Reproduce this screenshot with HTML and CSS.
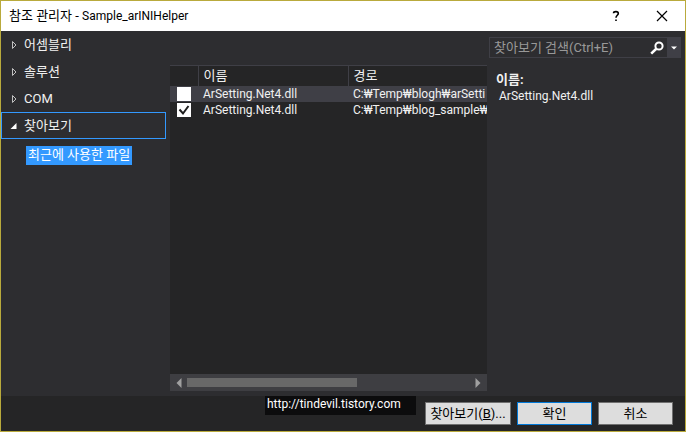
FILE: index.html
```
<!DOCTYPE html>
<html lang="ko">
<head>
  <meta charset="UTF-8">
  <title>참조 관리자 - Sample_arINIHelper</title>
  <link rel="stylesheet" href="styles.css">
</head>
<body>
  <div class="window">
    <header class="titlebar">
      <h1>참조 관리자 - <span class="latin">Sample_arINIHelper</span></h1>
      <button class="title-button" type="button" aria-label="도움말">
        <svg width="12" height="12" viewBox="0 0 12 12" fill="none" stroke="#000" stroke-width="1.6"><path d="M3.5 3.2C3.7 1 8.3 1 8.3 3.5C8.3 5.3 6 5.3 6 7.8M6 9.4V11"/></svg>
      </button>
      <button class="title-button" type="button" aria-label="닫기">
        <svg width="12" height="12" viewBox="0 0 12 12" fill="none" stroke="#000" stroke-width="1.2"><path d="M1 1L11 11M11 1L1 11"/></svg>
      </button>
    </header>

    <main class="content">
      <nav class="sidebar">
        <button class="group" type="button">
          <svg class="arrow" width="8" height="8" viewBox="0 0 8 8" fill="none" stroke="#c0c0c0"><path d="M2.5 .5V7.5L6 4Z"/></svg>
          어셈블리
        </button>
        <button class="group" type="button">
          <svg class="arrow" width="8" height="8" viewBox="0 0 8 8" fill="none" stroke="#c0c0c0"><path d="M2.5 .5V7.5L6 4Z"/></svg>
          솔루션
        </button>
        <button class="group" type="button">
          <svg class="arrow" width="8" height="8" viewBox="0 0 8 8" fill="none" stroke="#c0c0c0"><path d="M2.5 .5V7.5L6 4Z"/></svg>
          COM
        </button>
        <button class="group selected" type="button" aria-expanded="true">
          <svg class="arrow" width="8" height="8" viewBox="0 0 8 8" fill="#fff"><path d="M6.5 1V7H.5Z"/></svg>
          찾아보기
        </button>
        <a class="recent" href="#">최근에 사용한 파일</a>
      </nav>

      <section class="list">
        <div class="list-view">
          <table>
            <thead>
              <tr>
                <th class="check-col"></th>
                <th class="name-col">이름</th>
                <th>경로</th>
              </tr>
            </thead>
            <tbody>
              <tr class="current">
                <td class="check-col"><input type="checkbox" aria-label="ArSetting.Net4.dll"></td>
                <td>ArSetting.Net4.dll</td>
                <td>C:₩Temp₩blogh₩arSetti</td>
              </tr>
              <tr>
                <td class="check-col"><input type="checkbox" aria-label="ArSetting.Net4.dll" checked></td>
                <td>ArSetting.Net4.dll</td>
                <td>C:₩Temp₩blog_sample₩</td>
              </tr>
            </tbody>
          </table>
        </div>
        <div class="scrollbar">
          <svg width="6" height="10" viewBox="0 0 6 10" fill="#a0a0a0"><path d="M5.5 0V10L.5 5Z"/></svg>
          <div class="track"><div class="thumb"></div></div>
          <svg width="6" height="10" viewBox="0 0 6 10" fill="#a0a0a0"><path d="M.5 0V10L5.5 5Z"/></svg>
        </div>
      </section>

      <aside class="details">
        <div class="search">
          <input type="text" placeholder="찾아보기 검색(Ctrl+E)" aria-label="찾아보기 검색">
          <button class="search-go" type="button" aria-label="검색">
            <svg width="14" height="14" viewBox="0 0 14 14" fill="none" stroke="#fff"><circle cx="9" cy="5" r="3.6" stroke-width="2"/><path d="M6.3 7.8L1.2 12.6" stroke-width="2.6"/></svg>
          </button>
          <button class="search-menu" type="button" aria-label="검색 옵션">
            <svg width="6" height="4" viewBox="0 0 6 4" fill="#fff"><path d="M0 .5H6L3 3.5Z"/></svg>
          </button>
        </div>
        <dl>
          <dt>이름:</dt>
          <dd>ArSetting.Net4.dll</dd>
        </dl>
      </aside>
    </main>

    <footer class="footer">
      <span class="watermark">http://tindevil.tistory.com</span>
      <button class="button browse" type="button">찾아보기(<u>B</u>)...</button>
      <button class="button default" type="button">확인</button>
      <button class="button" type="button">취소</button>
    </footer>
  </div>
</body>
</html>
```
FILE: styles.css
```
* {
  box-sizing: border-box;
}

body {
  margin: 0;
  font-family: Roboto, "Noto Sans CJK KR", sans-serif;
  font-size: 13px;
  line-height: 16px;
  color: #f1f1f1;
}

button,
input {
  font: inherit;
  color: inherit;
  border-radius: 0;
}

button {
  padding: 0;
  border: 0;
  background: none;
}

.window {
  display: flex;
  flex-direction: column;
  height: 100vh;
  border: 1px solid #b9aa3c;
  background: #2d2d30;
}

/* title bar */
.titlebar {
  display: flex;
  align-items: center;
  height: 30px;
  padding-left: 8px;
  background: #fff;
  color: #000;
}

.titlebar h1 {
  flex: 1;
  margin: 0;
  font-size: 13px;
  font-weight: normal;
}

.latin,
td,
dd,
.watermark {
  font-size: 12px;
}

.title-button {
  display: flex;
  align-items: center;
  justify-content: center;
  width: 46px;
  height: 30px;
}

.content {
  flex: 1;
  display: flex;
  min-height: 0;
}

/* category tree */
.sidebar {
  width: 165px;
  margin-right: 4px;
}

.group {
  display: flex;
  align-items: center;
  gap: 6px;
  width: 100%;
  height: 27px;
  padding-left: 8px;
  border: 1px solid transparent;
}

.group.selected {
  border-color: #3399ff;
}

.recent {
  display: inline-block;
  margin: 7px 0 0 25px;
  padding: 1px 2px 2px;
  background: #3399ff;
  color: #fff;
  text-decoration: none;
}

/* file list */
.list {
  flex: 1;
  display: flex;
  flex-direction: column;
  min-width: 0;
  margin: 34px 0 5px;
  background: #252526;
}

.list-view {
  flex: 1;
  overflow: hidden;
}

table {
  width: 100%;
  table-layout: fixed;
  border-collapse: collapse;
}

th,
td {
  padding: 0 0 0 5px;
  text-align: left;
  font-weight: normal;
  white-space: nowrap;
}

th {
  height: 20px;
  border-top: 1px solid #3f3f46;
  border-right: 1px solid #3f3f46;
}

th:last-child {
  border-right: 0;
}

.check-col {
  width: 28px;
}

.name-col {
  width: 150px;
}

td {
  height: 16px;
}

.current {
  background: #3f3f46;
}

td input {
  display: block;
  appearance: none;
  width: 14px;
  height: 14px;
  margin: 0 0 0 2px;
  background: #fff;
}

td input:checked {
  background: #fff url("data:image/svg+xml,%3Csvg xmlns='http://www.w3.org/2000/svg' viewBox='0 0 14 14'%3E%3Cpath d='M2.5 6.5L6 10.5L11.5 3' fill='none' stroke='%231e1e1e' stroke-width='2'/%3E%3C/svg%3E");
}

.scrollbar {
  display: flex;
  align-items: center;
  gap: 5px;
  height: 17px;
  padding: 0 6px;
  background: #3e3e42;
}

.track {
  flex: 1;
}

.thumb {
  width: 60%;
  height: 9px;
  background: #686868;
}

/* search and details */
.details {
  width: 198px;
  padding: 6px 4px 0 2px;
}

.search {
  display: flex;
  height: 21px;
  border: 1px solid #3f3f46;
}

.search input {
  flex: 1;
  min-width: 0;
  padding: 0 0 0 4px;
  border: 0;
  background: none;
}

.search input::placeholder {
  color: #999;
}

.search-go {
  display: flex;
  align-items: center;
  justify-content: center;
  width: 16px;
  margin-right: 2px;
}

.search-menu {
  display: flex;
  align-items: center;
  justify-content: center;
  width: 13px;
  background: #3f3f46;
}

dl {
  margin: 14px 0 0 7px;
}

dt {
  font-weight: bold;
}

dd {
  margin: 0 0 0 3px;
}

/* footer */
.footer {
  position: relative;
  display: flex;
  align-items: center;
  justify-content: flex-end;
  gap: 6px;
  height: 35px;
  padding-right: 12px;
  background: #252526;
}

.button {
  width: 75px;
  height: 23px;
  border: 1px solid #707070;
  background: #ddd;
  color: #000;
}

.browse {
  width: 86px;
}

.default {
  border-color: #0078d7;
}

.watermark {
  position: absolute;
  top: 0;
  left: 264px;
  width: 151px;
  height: 19px;
  padding-left: 2px;
  background: #0c0c0d;
  color: #fff;
}
```
